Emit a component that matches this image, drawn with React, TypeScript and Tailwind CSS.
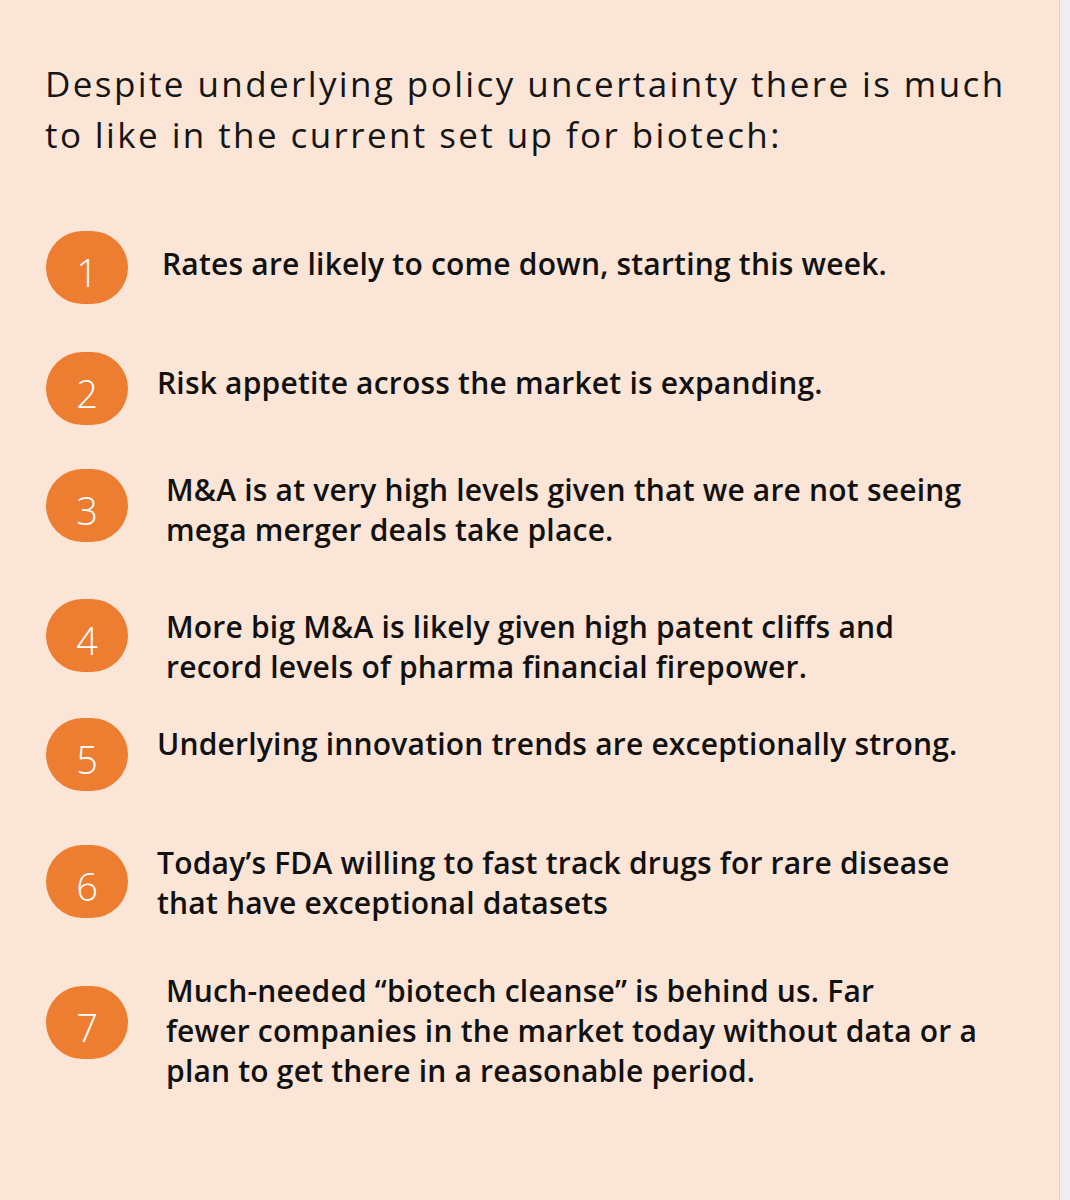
const items = [
  { n: 1, lines: ["Rates are likely to come down, starting this week."], h: "h-[121px]", ml: "ml-[34px]", mt: "mt-[13px]" },
  { n: 2, lines: ["Risk appetite across the market is expanding."], h: "h-[117px]", ml: "ml-[29px]", mt: "mt-[11px]" },
  {
    n: 3,
    lines: ["M&A is at very high levels given that we are not seeing", "mega merger deals take place."],
    h: "h-[130px]",
    ml: "ml-[38px]",
    mt: "mt-[1px]",
  },
  {
    n: 4,
    lines: ["More big M&A is likely given high patent cliffs and", "record levels of pharma financial firepower."],
    h: "h-[119px]",
    ml: "ml-[38px]",
    mt: "mt-[8px]",
  },
  { n: 5, lines: ["Underlying innovation trends are exceptionally strong."], h: "h-[127px]", ml: "ml-[29px]", mt: "mt-[6px]" },
  {
    n: 6,
    lines: ["Today\u2019s FDA willing to fast track drugs for rare disease", "that have exceptional datasets"],
    h: "h-[141px]",
    ml: "ml-[29px]",
    mt: "-mt-[2px]",
  },
  {
    n: 7,
    lines: [
      "Much-needed \u201cbiotech cleanse\u201d is behind us. Far",
      "fewer companies in the market today without data or a",
      "plan to get there in a reasonable period.",
    ],
    h: "h-[140px]",
    ml: "ml-[38px]",
    mt: "-mt-[15px]",
  },
];

export default function App() {
  return (
    <div className="flex h-[1200px] w-[1070px] overflow-hidden font-['Open_Sans',sans-serif]">
      <div className="flex-1 bg-[#fbe5d6]">
        {/* Heading */}
        <h1 className="pl-[45px] pt-[58px] text-[35px] leading-[51px] font-normal tracking-[2.4px] text-[#151515] whitespace-nowrap">
          Despite underlying policy uncertainty there is much
          <br />
          to like in the current set up for biotech:
        </h1>

        {/* Numbered points */}
        <div className="mt-[71px] pl-[46px]">
          {items.map((item) => (
            <div key={item.n} className={`flex items-start ${item.h}`}>
              <div className="flex h-[73px] w-[82px] shrink-0 items-center justify-center rounded-full bg-[#ed7d31]">
                <span className="mt-[8px] text-[38px] leading-none font-light text-white">{item.n}</span>
              </div>
              <p className={`${item.ml} ${item.mt} text-[30px] leading-[40px] font-semibold tracking-[0.2px] text-[#111] whitespace-nowrap`}>
                {item.lines.map((line, i) => (
                  <span key={i} className="block">
                    {line}
                  </span>
                ))}
              </p>
            </div>
          ))}
        </div>
      </div>
      <div className="w-[11px] border-l border-[#d6d6d6] bg-[#eeeeee]" />
    </div>
  );
}
